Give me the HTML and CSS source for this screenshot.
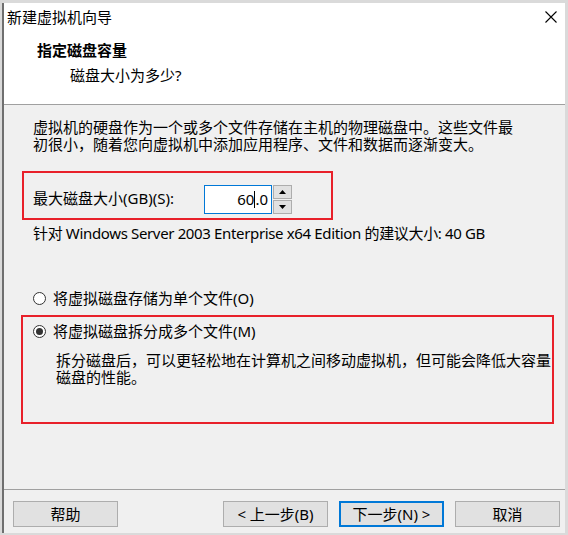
FILE: index.html
```html
<!DOCTYPE html>
<html lang="zh-CN">
<head>
<meta charset="utf-8">
<title>新建虚拟机向导</title>
<link rel="stylesheet" href="styles.css">
</head>
<body>
<div class="window">
  <div class="header">
    <div class="titlebar">
      <span class="title">新建虚拟机向导</span>
      <svg class="close" width="12" height="12" viewBox="0 0 12 12"><path d="M0.5 0.5 L11.5 11.5 M11.5 0.5 L0.5 11.5" stroke="#000" stroke-width="1.1" fill="none"/></svg>
    </div>
    <div class="h-main">指定磁盘容量</div>
    <div class="h-sub">磁盘大小为多少?</div>
  </div>
  <div class="content">
    <p class="intro">虚拟机的硬盘作为一个或多个文件存储在主机的物理磁盘中。这些文件最<br>初很小，随着您向虚拟机中添加应用程序、文件和数据而逐渐变大。</p>
    <div class="sizebox">
      <span class="size-label">最大磁盘大小(GB)(S):</span>
      <div class="spin-input"><span>60</span><span class="caret"></span><span>.0</span></div>
      <div class="spin">
        <div class="spin-btn"><svg width="7" height="4" viewBox="0 0 7 4"><path d="M0 4 L3.5 0 L7 4 Z" fill="#000"/></svg></div>
        <div class="spin-btn"><svg width="7" height="4" viewBox="0 0 7 4"><path d="M0 0 L3.5 4 L7 0 Z" fill="#000"/></svg></div>
      </div>
    </div>
    <div class="hint">针对 Windows Server 2003 Enterprise x64 Edition 的建议大小: 40 GB</div>
    <div class="radio radio-single"><span class="dot"></span><span>将虚拟磁盘存储为单个文件(O)</span></div>
    <div class="splitbox">
      <div class="radio"><span class="dot checked"></span><span>将虚拟磁盘拆分成多个文件(M)</span></div>
      <p class="desc">拆分磁盘后，可以更轻松地在计算机之间移动虚拟机，但可能会降低大容量<br>磁盘的性能。</p>
    </div>
  </div>
  <div class="footer">
    <button class="btn">帮助</button>
    <div class="nav">
      <button class="btn">&lt; 上一步(B)</button>
      <button class="btn default">下一步(N) &gt;</button>
      <button class="btn">取消</button>
    </div>
  </div>
</div>
</body>
</html>
```

FILE: styles.css
```css
* { box-sizing: border-box; }
html, body { margin: 0; padding: 0; }
body {
  width: 568px;
  height: 535px;
  background: #dadada;
  font-family: "Noto Sans", "Noto Sans CJK SC", sans-serif;
  font-size: 15px;
  line-height: 17px;
  color: #000;
  overflow: hidden;
}
.window {
  margin: 3px 0 0 2px;
  width: 563px;
  height: 530px;
  border-left: 2px solid #6f6f6f;
  background: #f0f0f0;
  display: flex;
  flex-direction: column;
}
.header {
  height: 102px;
  background: #fff;
  border-bottom: 1px solid #a0a0a0;
}
.titlebar {
  height: 28px;
  display: flex;
  align-items: center;
  justify-content: space-between;
  padding: 0 8px 0 3px;
}
.title { line-height: 28px; }
.close { display: block; }
.h-main {
  margin: 11px 0 0 33px;
  font-weight: bold;
}
.h-sub {
  margin: 8px 0 0 66px;
}
.content {
  flex: 1;
  padding: 14px 0 0 18px;
}
.intro {
  margin: 0 0 0 11px;
}
.sizebox {
  margin-top: 18px;
  width: 311px;
  height: 49px;
  border: 2px solid #e8202a;
  display: flex;
  align-items: flex-start;
  padding: 12px 0 0 9px;
}
.size-label {
  width: 171px;
  line-height: 26px;
}
.spin-input {
  width: 68px;
  height: 29px;
  border: 1px solid #0078d7;
  background: #fff;
  display: flex;
  align-items: center;
  justify-content: flex-end;
  padding-right: 3px;
  line-height: 17px;
}
.caret {
  width: 1px;
  height: 17px;
  background: #000;
}
.spin {
  margin-left: 1px;
  width: 19px;
  height: 29px;
  display: flex;
  flex-direction: column;
  gap: 1px;
}
.spin-btn {
  flex: 1;
  background: #e1e1e1;
  border: 1px solid #adadad;
  display: flex;
  align-items: center;
  justify-content: center;
}
.spin-btn svg { display: block; }
.hint {
  margin: 5px 0 0 11px;
  letter-spacing: -0.35px;
}
.radio {
  display: flex;
  align-items: center;
  gap: 7px;
}
.radio-single {
  margin: 48px 0 0 11px;
}
.dot {
  width: 13px;
  height: 13px;
  border-radius: 50%;
  border: 1px solid #333;
  background: #fff;
  display: flex;
  align-items: center;
  justify-content: center;
}
.dot.checked::after {
  content: "";
  width: 7px;
  height: 7px;
  border-radius: 50%;
  background: #333;
}
.splitbox {
  margin: 8px 0 0 -1px;
  width: 533px;
  height: 109px;
  border: 2px solid #e8202a;
  padding: 6px 0 0 10px;
}
.desc {
  margin: 12px 0 0 23px;
}
.footer {
  height: 44px;
  border-top: 1px solid #a0a0a0;
  display: flex;
  justify-content: space-between;
  align-items: flex-start;
  padding: 11px 5px 0 9px;
}
.nav {
  display: flex;
  gap: 11px;
}
.btn {
  width: 105px;
  height: 26px;
  background: #e1e1e1;
  border: 1px solid #adadad;
  font: inherit;
  line-height: 17px;
  color: #000;
  padding: 0;
  margin: 0;
}
.btn.default {
  border: 2px solid #0078d7;
}
```
